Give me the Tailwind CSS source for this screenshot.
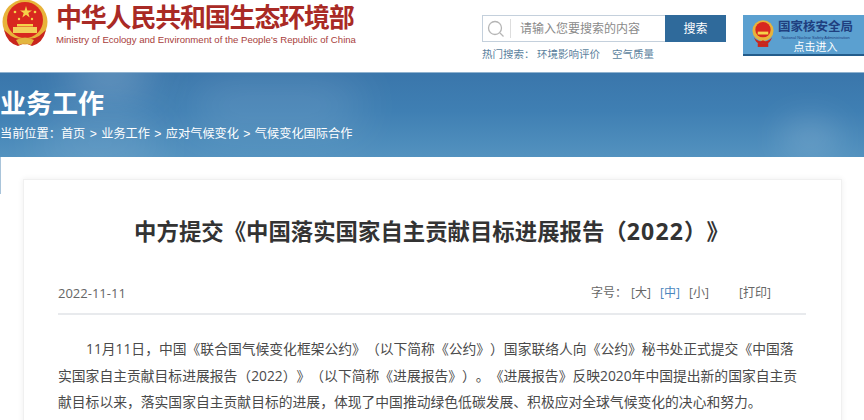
<!DOCTYPE html>
<html lang="zh">
<head>
<meta charset="utf-8">
<title>中方提交《中国落实国家自主贡献目标进展报告（2022）》</title>
<script src="https://cdn.jsdelivr.net/npm/@tailwindcss/browser@4"></script>
</head>
<body class="w-[864px] h-[420px] overflow-hidden bg-white [text-spacing-trim:space-all] font-['Liberation_Sans','Noto_Sans_CJK_SC',sans-serif]">
  <!-- header -->
  <header class="h-[72px] flex items-start">
    <div class="flex w-[482px] pl-[2px]">
      <svg class="w-[46px] h-[48px] shrink-0" viewBox="0 0 46 48">
        <circle cx="23" cy="22" r="22.5" fill="#e8b33a"/>
        <circle cx="23" cy="20" r="18" fill="#d8281f"/>
        <polygon points="24,6 25.4,10.4 30,10.4 26.3,13.1 27.7,17.5 24,14.8 20.3,17.5 21.7,13.1 18,10.4 22.6,10.4" fill="#f5d24a"/>
        <circle cx="13" cy="12" r="1.3" fill="#f5d24a"/><circle cx="33" cy="12" r="1.3" fill="#f5d24a"/>
        <circle cx="17" cy="19" r="1.2" fill="#f5d24a"/><circle cx="30" cy="19" r="1.2" fill="#f5d24a"/>
        <rect x="15" y="24" width="16" height="2.5" fill="#f5d24a"/>
        <rect x="11" y="27" width="24" height="6" fill="#f3cf5a"/>
        <path d="M2 30 Q5 43 16 46 L23 43 L30 46 Q41 43 44 30 L37 36 Q29 41 23 37 Q17 41 9 36 Z" fill="#c9261d"/>
        <path d="M14 40 Q23 35 32 40 L29 45 Q23 42 17 45 Z" fill="#e2b640"/>
      </svg>
      <div class="ml-[8px] pt-[4px]">
        <div class="text-[26px] leading-[29px] font-bold text-[#a92a25] tracking-[-1.2px] whitespace-nowrap">中华人民共和国生态环境部</div>
        <div class="text-[9.6px] leading-[13px] text-[#a8403c] whitespace-nowrap">Ministry of Ecology and Environment of the People's Republic of China</div>
      </div>
    </div>
    <div class="w-[244px] pt-[15px]">
      <div class="flex h-[27px]">
        <div class="w-[183px] flex items-center border border-[#c4d0dc] border-r-0">
          <svg class="w-[18px] h-[18px] ml-[4px] shrink-0" viewBox="0 0 18 18" fill="none" stroke="#b5b5b5" stroke-width="1.3">
            <circle cx="8" cy="8" r="6.5"/><path d="M13 13l3.5 3.5"/>
          </svg>
          <span class="ml-[5px] w-px h-[19px] bg-[#dddddd]"></span>
          <span class="ml-[9px] text-[12px] text-[#8a8a8a] whitespace-nowrap">请输入您要搜索的内容</span>
        </div>
        <div class="w-[61px] flex items-center justify-center bg-[#2f6a9b] text-white text-[12px]">搜索</div>
      </div>
      <div class="mt-[4px] flex text-[10.5px] leading-[16px] text-[#5b7f9d] whitespace-nowrap">
        <span class="w-[55px]">热门搜索：</span><span class="w-[75px]">环境影响评价</span><span>空气质量</span>
      </div>
    </div>
    <div class="ml-[17px] mt-[15px] w-[121px] h-[41px] bg-[#5ba0d0] border-b-2 border-[#235c8b] flex items-start pt-[5px] pl-[9px]">
      <svg class="w-[22px] h-[29px] shrink-0" viewBox="0 0 23 30">
        <circle cx="11.5" cy="11" r="11" fill="#e8b33a"/>
        <circle cx="11.5" cy="10" r="8" fill="#d8281f"/>
        <rect x="6" y="12" width="11" height="3" fill="#f5d24a"/>
        <path d="M2 18 Q5 27 11.5 24 Q18 27 21 18 Q16 24 11.5 21 Q7 24 2 18 Z" fill="#c9261d"/>
        <rect x="6" y="24" width="11" height="4" fill="#c9261d"/>
      </svg>
      <div class="ml-[4px] text-center">
        <div class="text-[12.5px] leading-[15px] font-bold text-[#1f3f7f] whitespace-nowrap">国家核安全局</div>
        <div class="text-[4px] leading-[6px] text-[#1f3f7f] whitespace-nowrap">National Nuclear Safety Administration</div>
        <div class="text-[11px] leading-[13px] text-white whitespace-nowrap">点击进入</div>
      </div>
    </div>
  </header>

  <!-- banner -->
  <section class="relative h-[85px] border-t border-[#8fb2cf] overflow-hidden bg-[linear-gradient(180deg,#3a76ab_0%,#3f7fb3_45%,#5392bf_100%)] text-white">
    <div class="absolute left-[70px] top-[-20px] w-[80px] h-[40px] rounded-full bg-white/30 blur-xl"></div>
    <div class="absolute left-[190px] top-[10px] w-[170px] h-[45px] rounded-full bg-white/15 blur-xl"></div>
    <div class="absolute left-[40px] top-[50px] w-[120px] h-[40px] rounded-full bg-white/15 blur-xl"></div>
    <div class="absolute left-[780px] top-[45px] w-[60px] h-[40px] rounded-full bg-white/15 blur-lg"></div>
    <div class="relative pt-[15px]">
      <h2 class="text-[26px] leading-[32px] font-bold">业务工作</h2>
      <p class="mt-[6px] text-[12.2px] leading-[16px] whitespace-nowrap [word-spacing:1px]">当前位置：首页 &gt; 业务工作 &gt; 应对气候变化 &gt; 气候变化国际合作</p>
    </div>
  </section>

  <!-- article -->
  <main class="relative pl-[23px] pt-[22px] font-['Open_Sans','Noto_Sans_CJK_SC',sans-serif]">
    <div class="absolute left-0 top-0 w-px h-[37px] bg-[#a9c4da]"></div>
    <article class="w-[819px] h-[300px] bg-white border border-[#f0f0f0] shadow-[0_0_6px_rgba(0,0,0,0.07)] pl-[34px] pr-[35px]">
      <h1 class="pt-[36px] pr-[1px] text-center text-[22.4px] leading-[30px] font-bold text-[#333333] whitespace-nowrap">中方提交《中国落实国家自主贡献目标进展报告（<span class="text-[23px] tracking-[1.2px]">2022</span>）》</h1>
      <div class="mt-[36px] h-[32px] flex items-start justify-between border-b-2 border-[#e8eaed] text-[13px] leading-[20px] text-[#666666]">
        <span>2022-11-11</span>
        <div class="flex pr-[31px] text-[12px] whitespace-nowrap">
          <span class="w-[40px]">字号：</span><span class="w-[29px]">[大]</span><span class="w-[29px] text-[#4a86bd]">[中]</span><span class="w-[50px]">[小]</span><span class="w-[36px]">[打印]</span>
        </div>
      </div>
      <p class="mt-[21px] text-[13.8px] leading-[26.5px] text-[#4a4a4a] indent-[28px] whitespace-nowrap">11月11日，中国《联合国气候变化框架公约》（以下简称《公约》）国家联络人向《公约》秘书处正式提交《中国落<br>实国家自主贡献目标进展报告（2022）》（以下简称《进展报告》）。《进展报告》反映2020年中国提出新的国家自主贡<br>献目标以来，落实国家自主贡献目标的进展，体现了中国推动绿色低碳发展、积极应对全球气候变化的决心和努力。</p>
    </article>
  </main>
</body>
</html>
